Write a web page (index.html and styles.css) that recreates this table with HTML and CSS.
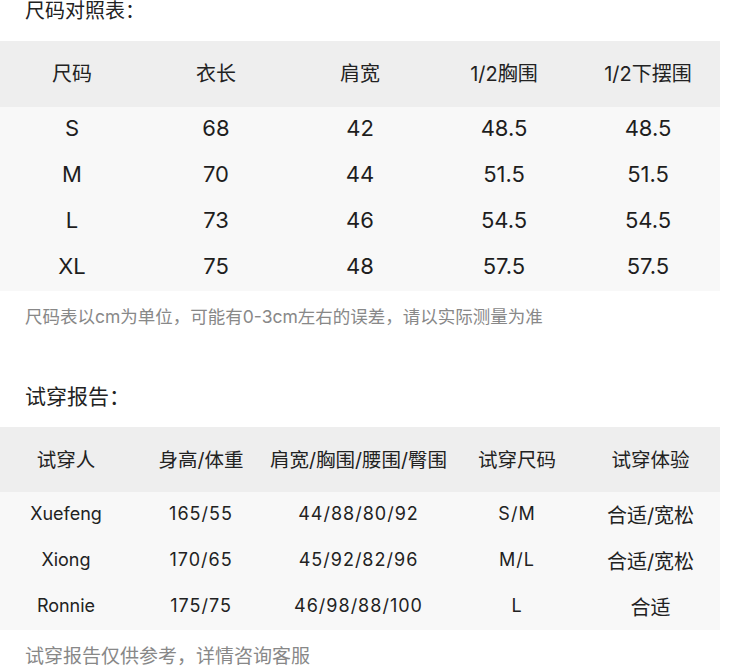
FILE: index.html
```html
<!DOCTYPE html>
<html lang="zh">
<head>
<meta charset="utf-8">
<link rel="stylesheet" href="styles.css">
</head>
<body>
<div class="page">
  <div class="title">尺码对照表：</div>
  <table class="size-table">
    <thead>
      <tr><th>尺码</th><th>衣长</th><th>肩宽</th><th>1/2胸围</th><th>1/2下摆围</th></tr>
    </thead>
    <tbody>
      <tr><td>S</td><td>68</td><td>42</td><td>48.5</td><td>48.5</td></tr>
      <tr><td>M</td><td>70</td><td>44</td><td>51.5</td><td>51.5</td></tr>
      <tr><td>L</td><td>73</td><td>46</td><td>54.5</td><td>54.5</td></tr>
      <tr><td>XL</td><td>75</td><td>48</td><td>57.5</td><td>57.5</td></tr>
    </tbody>
  </table>
  <div class="note">尺码表以cm为单位，可能有0-3cm左右的误差，请以实际测量为准</div>

  <div class="title title-2">试穿报告：</div>
  <table class="fit-table">
    <colgroup>
      <col class="c1"><col class="c2"><col class="c3"><col class="c4"><col class="c5">
    </colgroup>
    <thead>
      <tr><th>试穿人</th><th>身高/体重</th><th>肩宽/胸围/腰围/臀围</th><th>试穿尺码</th><th>试穿体验</th></tr>
    </thead>
    <tbody>
      <tr><td>Xuefeng</td><td class="num">165/55</td><td class="num">44/88/80/92</td><td class="num">S/M</td><td class="cjk">合适/宽松</td></tr>
      <tr><td>Xiong</td><td class="num">170/65</td><td class="num">45/92/82/96</td><td class="num">M/L</td><td class="cjk">合适/宽松</td></tr>
      <tr><td>Ronnie</td><td class="num">175/75</td><td class="num">46/98/88/100</td><td class="num">L</td><td class="cjk">合适</td></tr>
    </tbody>
  </table>
  <div class="note note-2">试穿报告仅供参考，详情咨询客服</div>
</div>
</body>
</html>
```

FILE: styles.css
```css
html, body {
  margin: 0;
  padding: 0;
  background: #ffffff;
}
body {
  font-family: Inter, "Noto Sans CJK SC", sans-serif;
  color: #222222;
}
.page {
  width: 720px;
}
.title {
  font-size: 20px;
  line-height: 22px;
  padding-left: 25px;
  color: #222222;
  margin-bottom: 19px;
}
.title-2 {
  font-size: 21px;
  margin-top: 57px;
}
table {
  width: 720px;
  border-collapse: collapse;
  table-layout: fixed;
}
th {
  background: #eeeeee;
  font-weight: normal;
  font-size: 20px;
  color: #222222;
  padding: 0 0 3px 0;
  text-align: center;
  white-space: nowrap;
}
td {
  background: #f8f8f8;
  text-align: center;
  padding: 0 0 4px 0;
  white-space: nowrap;
}
.size-table thead tr { height: 66px; }
.size-table tbody tr { height: 46px; }
.size-table td {
  font-size: 22px;
  color: #1e1e1e;
}
.fit-table thead tr { height: 65px; }
.fit-table th {
  font-size: 19.5px;
}
.fit-table th:last-child,
.fit-table td:last-child {
  padding-right: 6px;
}
.fit-table tbody tr { height: 46px; }
.fit-table td {
  font-size: 18px;
  color: #222222;
}
.fit-table td.num {
  letter-spacing: 1px;
}
.fit-table td.cjk {
  font-size: 20px;
  padding-bottom: 2px;
}
.c1 { width: 132px; }
.c2 { width: 138px; }
.c3 { width: 177px; }
.c4 { width: 140px; }
.c5 { width: 133px; }
.note {
  font-size: 17.5px;
  line-height: 24px;
  color: #888888;
  padding-left: 25px;
  margin-top: 14px;
}
.note-2 {
  font-size: 19px;
  margin-top: 15px;
}
```
